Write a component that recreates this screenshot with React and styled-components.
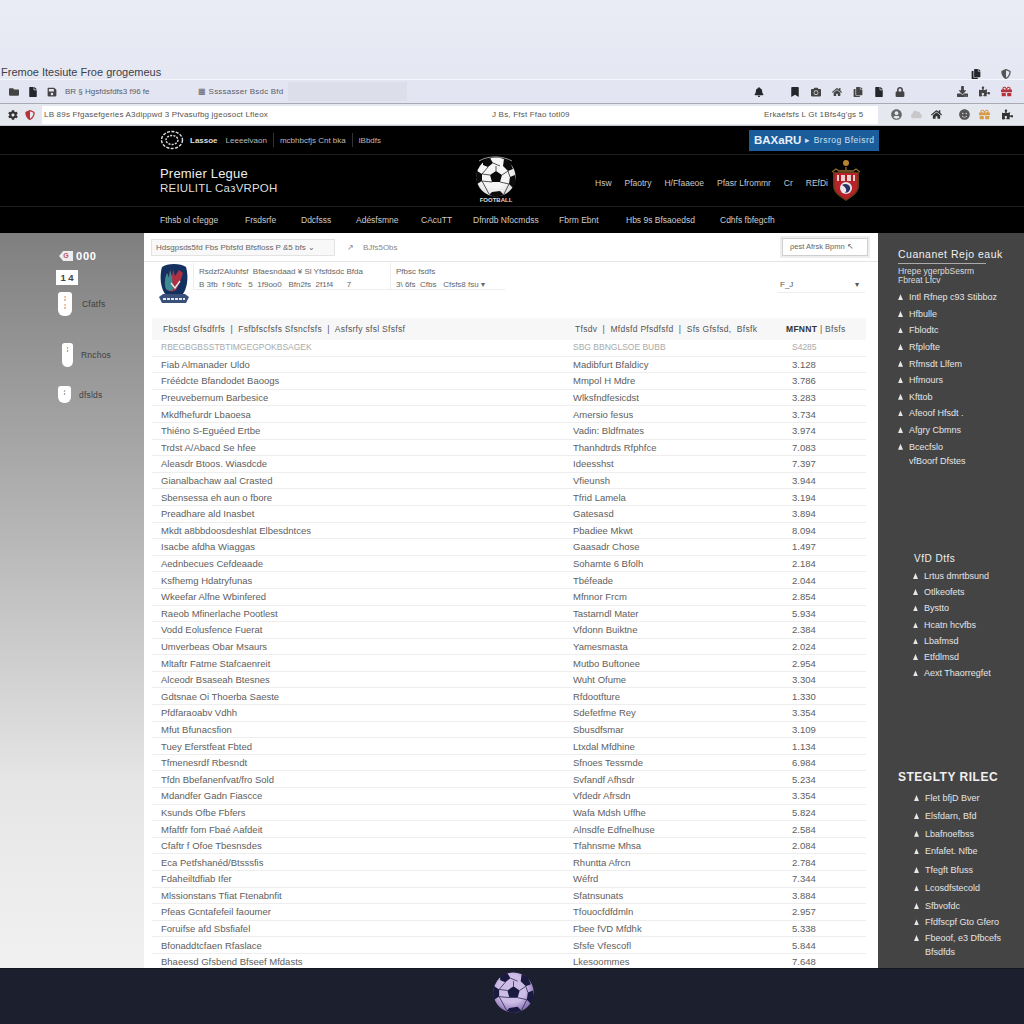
import React from "react";
import styled, { createGlobalStyle } from "styled-components";
import {
  FaFolder,
  FaFile,
  FaSave,
  FaBell,
  FaBookmark,
  FaCamera,
  FaCloud,
  FaCog,
  FaCopy,
  FaDownload,
  FaGift,
  FaHome,
  FaLock,
  FaPuzzlePiece,
  FaSmile,
  FaUserCircle,
  FaShieldAlt,
} from "react-icons/fa";

const GlobalStyle = createGlobalStyle`
  html, body { margin: 0; padding: 0; background: #fff; }
  * { box-sizing: border-box; }
`;

const Page = styled.div`
  width: 1024px;
  height: 1024px;
  display: flex;
  flex-direction: column;
  overflow: hidden;
  font-family: "Liberation Sans", Arial, sans-serif;
`;

const TitleBar = styled.div`
  height: 80px;
  background: linear-gradient(#e9ebf5, #e5e8f2);
  display: flex;
  align-items: flex-end;
  justify-content: space-between;
  padding: 0 13px 0 1px;
  font-size: 11px;
  color: #3d4048;
  border-bottom: 1px solid #f5f6fb;
  span { line-height: 14px; }
`;

const IconGroup = styled.div`
  display: flex;
  align-items: center;
  gap: ${(p) => p.$gap || 10}px;
  color: ${(p) => p.$color || "#25262b"};
  font-size: ${(p) => p.$size || 11}px;
`;

const TabBar = styled.div`
  height: 23px;
  background: #e3e6f2;
  display: flex;
  align-items: center;
  padding: 0 10px 0 9px;
  font-size: 8px;
  color: #5a5d66;
`;

const Spacer = styled.div`
  width: ${(p) => p.$w}px;
  flex: none;
`;

const TabText = styled.span`
  width: ${(p) => p.$w}px;
  flex: none;
  white-space: nowrap;
  letter-spacing: ${(p) => p.$track || 0}px;
`;

const TabFill = styled.div`
  width: 119px;
  height: 19px;
  background: #dcdfea;
  flex: none;
`;

const AddressRow = styled.div`
  height: 23px;
  background: #e6e8f0;
  border-top: 1px solid #a9abb3;
  border-bottom: 1px solid #c6c8d0;
  display: flex;
  align-items: center;
  padding: 0 8px;
`;

const AddressField = styled.div`
  width: 836px;
  height: 18px;
  flex: none;
  margin-right: 13px;
  background: #fff;
  display: grid;
  grid-template-columns: 448px 272px 1fr;
  align-items: center;
  padding-left: 2px;
  font-size: 8px;
  letter-spacing: 0.2px;
  color: #555;
  white-space: nowrap;
`;

const Masthead = styled.header`
  background: #000;
  color: #eee;
`;

const MastRow = styled.div`
  height: ${(p) => p.$h}px;
  border-bottom: 1px solid #1d1d1d;
  padding-left: 160px;
  display: flex;
  align-items: center;
`;

const TopLinks = styled.div`
  width: 589px;
  display: flex;
  align-items: center;
  gap: 6px;
  font-size: 8px;
  color: #bbb;
  b { color: #ddd; margin-right: 2px; }
`;

const Divider = styled.i`
  width: 1px;
  height: 14px;
  background: #333;
`;

const BlueButton = styled.div`
  width: 130px;
  height: 21px;
  background: #1b5c9a;
  color: #cfe0f0;
  font-size: 8.5px;
  letter-spacing: 0.5px;
  display: flex;
  align-items: center;
  gap: 4px;
  padding-left: 5px;
  white-space: nowrap;
  b { font-size: 11.5px; letter-spacing: 0; color: #e6f0fa; }
`;

const Brand = styled.div`
  width: 311px;
  line-height: 14px;
  font-size: 13px;
  letter-spacing: 0.2px;
  small { display: block; font-size: 11.5px; color: #ddd; }
`;

const MastLinks = styled.nav`
  width: 233px;
  margin: 4px 2px 0 74px;
  display: flex;
  justify-content: space-between;
  font-size: 8.5px;
  color: #c8c8c8;
  white-space: nowrap;
`;

const NavGrid = styled.nav`
  height: 26px;
  padding-left: 160px;
  display: grid;
  grid-template-columns: 85px 56px 55px 65px 52px 86px 67px 94px 80px;
  align-items: center;
  font-size: 8.5px;
  color: #ccc;
  white-space: nowrap;
`;

const Body = styled.div`
  flex: 1;
  min-height: 0;
  display: flex;
`;

const LeftRail = styled.aside`
  width: 144px;
  flex: none;
  padding: 16px 0 0 56px;
  background: linear-gradient(#7f7f7f, #b5b5b5 40%, #e6e6e6 75%, #f1f1f1);
  color: #fff;
`;

const Score = styled.div`
  display: flex;
  align-items: center;
  gap: 3px;
  padding-left: 3px;
  font-size: 11px;
  font-weight: bold;
  letter-spacing: 0.8px;
  line-height: 14px;
`;

const ScoreBadge = styled.span`
  width: 14px;
  height: 10px;
  background: #eee;
  clip-path: polygon(0 50%, 30% 0, 100% 0, 100% 100%, 30% 100%);
  color: #b5556b;
  font-size: 7px;
  line-height: 10px;
  letter-spacing: 0;
  text-align: center;
`;

const CountBox = styled.div`
  width: 22px;
  height: 15px;
  margin-top: 7px;
  background: #fff;
  color: #444;
  font-size: 9.5px;
  font-weight: bold;
  text-align: center;
  line-height: 15px;
`;

const RailItem = styled.div`
  display: flex;
  align-items: center;
  gap: ${(p) => p.$gap}px;
  margin-top: ${(p) => p.$top}px;
  padding-left: ${(p) => p.$indent}px;
  font-size: 8.5px;
  letter-spacing: 0.2px;
  color: #3f3f3f;
`;

const Tag = styled.div`
  width: ${(p) => p.$w}px;
  height: ${(p) => p.$h}px;
  flex: none;
  background: #fff;
  border-radius: 3px 3px 6px 6px;
  color: #444;
  font-size: 7px;
  line-height: 8px;
  text-align: center;
  padding-top: 3px;
`;

const Main = styled.main`
  width: 734px;
  flex: none;
  background: #fff;
  overflow: hidden;
`;

const Toolbar = styled.div`
  height: 29px;
  padding: 0 10px 0 7px;
  border-bottom: 1px solid #e4e4e4;
  display: flex;
  align-items: center;
  font-size: 8px;
  color: #666;
  white-space: nowrap;
`;

const SearchBox = styled.div`
  width: 184px;
  height: 17px;
  padding-left: 4px;
  background: #f8f8f8;
  border: 1px solid #e3e3e3;
  line-height: 15px;
`;

const SearchHint = styled.span`
  margin-left: 12px;
  flex: 1;
  color: #888;
`;

const ToolButton = styled.div`
  width: 86px;
  height: 18px;
  padding-left: 7px;
  border: 1px solid #cfcfcf;
  box-shadow: 0 0 0 2px #eee;
  line-height: 16px;
  font-size: 7.5px;
`;

const FilterRow = styled.div`
  height: 56px;
  padding: 1px 13px 0 15px;
  display: flex;
  align-items: flex-start;
`;

const FilterBox = styled.div`
  width: ${(p) => p.$w}px;
  height: 27px;
  margin-left: ${(p) => p.$left}px;
  padding: 2px 5px 0;
  border-bottom: 1px solid #eee;
  border-left: 1px solid #eee;
  font-size: 8px;
  line-height: 13px;
  color: #666;
  white-space: pre;
`;

const SelectBox = styled.div`
  width: 87px;
  height: 16px;
  margin: 14px 0 0 auto;
  padding: 0 6px 0 2px;
  border-bottom: 1px solid #eee;
  display: flex;
  justify-content: space-between;
  font-size: 8px;
  line-height: 15px;
  color: #555;
`;

const Table = styled.div`
  margin: 0 12px 0 8px;
`;

const TableHead = styled.div`
  height: 22px;
  background: #f7f7f7;
  display: grid;
  grid-template-columns: 412px 211px 1fr;
  align-items: center;
  padding-left: 11px;
  font-size: 8.5px;
  letter-spacing: 0.3px;
  color: #555;
  white-space: pre;
  b { color: #333; }
`;

const Row = styled.div`
  height: 16.6px;
  display: grid;
  grid-template-columns: 412px 219px 1fr;
  align-items: center;
  padding-left: 9px;
  border-bottom: 1px solid #eee;
  font-size: ${(p) => (p.$faint ? 8.5 : 9.5)}px;
  line-height: 15px;
  color: ${(p) => (p.$faint ? "#aaa" : "#606060")};
  white-space: nowrap;
`;

const RightRail = styled.aside`
  flex: 1;
  background: #444;
  color: #e4e4e4;
  padding: 14px 0 0 20px;
  font-size: 9px;
`;

const RailHeading = styled.h3`
  margin: ${(p) => p.$top || 0}px 0 0;
  padding-left: ${(p) => p.$indent || 0}px;
  font-size: ${(p) => p.$size || 10.5}px;
  font-weight: ${(p) => p.$weight || "normal"};
  letter-spacing: 0.5px;
  line-height: 14px;
  color: #f0f0f0;
  white-space: nowrap;
`;

const RailRule = styled.div`
  width: 88px;
  height: 1px;
  margin-top: 2px;
  background: #aaa;
`;

const RailNote = styled.p`
  margin: 3px 0 4px;
  font-size: 8.5px;
  line-height: 9px;
  color: #ddd;
`;

const RailList = styled.ul`
  list-style: none;
  margin: ${(p) => p.$top || 0}px 0 0;
  padding: 0 0 0 ${(p) => p.$indent || 0}px;
`;

const RailLink = styled.li`
  height: ${(p) => p.$h}px;
  display: flex;
  align-items: center;
  gap: 6px;
  white-space: nowrap;
  &::before {
    content: "";
    width: 5px;
    height: 6px;
    flex: none;
    background: ${(p) => (p.$plain ? "transparent" : "#e8e8e8")};
    clip-path: polygon(50% 0, 100% 100%, 0 100%);
  }
`;

const Footer = styled.footer`
  height: 56px;
  flex: none;
  background: #1c1f2e;
  border-top: 1px solid #14161f;
  display: flex;
  justify-content: center;
  padding: 3px 0 0 2px;
`;

const rows = [
  ["RBEGBGBSSTBTIMGEGPOKBSAGEK", "SBG BBNGLSOE BUBB", "S4285"],
  ["Fiab Almanader Uldo", "Madibfurt Bfaldicy", "3.128"],
  ["Fréédcte Bfandodet Baoogs", "Mmpol H Mdre", "3.786"],
  ["Preuvebernum Barbesice", "Wlksfndfesicdst", "3.283"],
  ["Mkdfhefurdr Lbaoesa", "Amersio fesus", "3.734"],
  ["Thiéno S-Eguéed Ertbe", "Vadin: Bldfmates", "3.974"],
  ["Trdst A/Abacd Se hfee", "Thanhdtrds Rfphfce", "7.083"],
  ["Aleasdr Btoos. Wiasdcde", "Ideesshst", "7.397"],
  ["Gianalbachaw aal Crasted", "Vfieunsh", "3.944"],
  ["Sbensessa eh aun o fbore", "Tfrid Lamela", "3.194"],
  ["Preadhare ald Inasbet", "Gatesasd", "3.894"],
  ["Mkdt a8bbdoosdeshlat Elbesdntces", "Pbadiee Mkwt", "8.094"],
  ["Isacbe afdha Wiaggas", "Gaasadr Chose", "1.497"],
  ["Aednbecues Cefdeaade", "Sohamte 6 Bfolh", "2.184"],
  ["Ksfhemg Hdatryfunas", "Tbéfeade", "2.044"],
  ["Wkeefar Alfne Wbinfered", "Mfnnor Frcm", "2.854"],
  ["Raeob Mfinerlache Pootlest", "Tastarndl Mater", "5.934"],
  ["Vodd Eolusfence Fuerat", "Vfdonn Buiktne", "2.384"],
  ["Umverbeas Obar Msaurs", "Yamesmasta", "2.024"],
  ["Mltaftr Fatme Stafcaenreit", "Mutbo Buftonee", "2.954"],
  ["Alceodr Bsaseah Btesnes", "Wuht Ofume", "3.304"],
  ["Gdtsnae Oi Thoerba Saeste", "Rfdootfture", "1.330"],
  ["Pfdfaraoabv Vdhh", "Sdefetfme Rey", "3.354"],
  ["Mfut Bfunacsfion", "Sbusdfsmar", "3.109"],
  ["Tuey Eferstfeat Fbted", "Ltxdal Mfdhine", "1.134"],
  ["Tfmenesrdf Rbesndt", "Sfnoes Tessmde", "6.984"],
  ["Tfdn Bbefanenfvat/fro Sold", "Svfandf Afhsdr", "5.234"],
  ["Mdandfer Gadn Fiascce", "Vfdedr Afrsdn", "3.354"],
  ["Ksunds Ofbe Fbfers", "Wafa Mdsh Uffhe", "5.824"],
  ["Mfaftfr fom Fbaé Aafdeit", "Alnsdfe Edfnelhuse", "2.584"],
  ["Cfaftr f Ofoe Tbesnsdes", "Tfahnsme Mhsa", "2.084"],
  ["Eca Petfshanéd/Btsssfis", "Rhuntta Afrcn", "2.784"],
  ["Fdaheiltdfiab Ifer", "Wéfrd", "7.344"],
  ["Mlssionstans Tfiat Ftenabnfit", "Sfatnsunats", "3.884"],
  ["Pfeas Gcntafefeil faoumer", "Tfouocfdfdmln", "2.957"],
  ["Foruifse afd Sbsfiafel", "Fbee fVD Mfdhk", "5.338"],
  ["Bfonaddtcfaen Rfaslace", "Sfsfe Vfescofl", "5.844"],
  ["Bhaeesd Gfsbend Bfseef Mfdasts", "Lkesoommes", "7.648"],
];

const navItems = [
  "Fthsb ol cfegge",
  "Frsdsrfe",
  "Ddcfsss",
  "Adésfsmne",
  "CAcuTT",
  "Dfnrdb Nfocmdss",
  "Fbrm Ebnt",
  "Hbs 9s Bfsaoedsd",
  "Cdhfs fbfegcfh",
];

const firstLinks = [
  "Intl Rfnep c93 Stibboz",
  "Hfbulle",
  "Fblodtc",
  "Rfplofte",
  "Rfmsdt Llfem",
  "Hfmours",
  "Kfttob",
  "Afeoof Hfsdt .",
  "Afgry Cbmns",
  "Bcecfslo",
];

const secondLinks = [
  ["Lrtus dmrtbsund", 16],
  ["Otlkeofets", 16],
  ["Bystto", 17],
  ["Hcatn hcvfbs", 17],
  ["Lbafmsd", 15],
  ["Etfdlmsd", 16],
  ["Aext Thaorregfet", 17],
];

const thirdLinks = [
  ["Flet bfjD Bver", 18],
  ["Elsfdarn, Bfd", 18],
  ["Lbafnoefbss", 17.5],
  ["Enfafet. Nfbe", 18],
  ["Tfegft Bfuss", 19],
  ["Lcosdfstecold", 18],
  ["Sfbvofdc", 17],
  ["Ffdfscpf Gto Gfero", 16],
  ["Fbeoof, e3 Dfbcefs", 15],
];

// same panel layout for both balls, only the colours and the label differ
const Ball = ({ size, skin, rim, patch, label, id }) => (
  <svg width={size} height={size} viewBox={label ? "-25 -21 50 50" : "-20 -20 40 40"} aria-hidden="true">
    <defs>
      <radialGradient id={id} cx="45%" cy="40%" r="65%">
        <stop offset="55%" stopColor={skin} />
        <stop offset="100%" stopColor={rim} />
      </radialGradient>
    </defs>
    <circle r="19.6" fill={`url(#${id})`} />
    <g fill={patch}>
      <path d="M0-6l6 4-2 7h-8l-2-7z" />
      <path d="M-13-16l7-3 3 5-5 4-5-2z" />
      <path d="M8-18l6 3 3 7-5 2-5-5z" />
      <path d="M19-2l1 7-3 6-4-4 1-7z" />
      <path d="M-4 15l8-1 4 4-8 2-7-2z" />
      <path d="M-19-6l5 3v7l-5 3-1-7z" />
    </g>
    <path
      d="M0-6v-5M6-2l6-4M4 5l9 2M-4 5l-10-1M-6-2l-8-1M-3-14l7 3M-8-10l-6 7M12-6l2 6M13 7l-5 10M-14 4l7 13"
      stroke={patch}
      strokeWidth="0.7"
      fill="none"
    />
    {label && (
      <>
        <path d="M-17-16c10-6 24-5 33 0" stroke="#bbb" strokeWidth="0.8" fill="none" />
        <text y="25" textAnchor="middle" fontSize="6" fontWeight="bold" fill="#ddd" fontFamily="Liberation Sans">
          {label}
        </text>
      </>
    )}
  </svg>
);

const RedCrest = () => (
  <svg width="32" height="44" viewBox="0 0 32 44" aria-hidden="true">
    <circle cx="16" cy="4" r="3" fill="#b8842c" />
    <path d="M16 8v3M2 13l4-3 3 2h14l3-2 4 3" stroke="#8a6a2c" strokeWidth="1.4" fill="none" />
    <path d="M3 13h26v14c0 7-7 11-13 15C10 38 3 34 3 27z" fill="#5c3a14" />
    <path d="M4.500 14h23v13c0 6-6 10-11.500 13.500C11 37 4.500 33 4.500 27z" fill="#b8222a" />
    <path d="M7 16h18v6H7z" fill="#eccfcf" />
    <path d="M10 16v6M16 16v6M22 16v6" stroke="#a81c22" strokeWidth="2" />
    <circle cx="16" cy="29" r="6" fill="#e8e8e8" />
    <path d="M12 26c3-2 7-1 8 2s-2 6-5 6c2-2 2-5-3-8z" fill="#2b2f66" />
  </svg>
);

const BlueCrest = () => (
  <svg width="30" height="41" viewBox="0 0 30 41" aria-hidden="true">
    <path d="M3 4c5-4 19-4 24 0 3 10 1 23-4 28H7C2 27 0 14 3 4z" fill="#13305e" />
    <path d="M7 26c-2-6-1-11 1-16l2 5 1-8 2 7 1-8 2 7 4-6 4 3-3 9-4 8c-3 2-7 2-10-1z" fill="#b03043" />
    <path d="M7 26c-2-6-1-11 1-16l2 5 1-8 2 7 1 13c-2 1-5 1-7-1z" fill="#3c8a92" />
    <path d="M12 20l4 5 5-7" stroke="#e8e8e8" strokeWidth="1.4" fill="none" />
    <path d="M0 34l4-3h22l4 3-3 6H3z" fill="#39507a" />
    <path d="M4 36h22" stroke="#e6e6e6" strokeWidth="2" strokeDasharray="3 1" />
  </svg>
);

const LogoMark = () => (
  <svg width="24" height="20" viewBox="0 0 24 20" aria-hidden="true">
    <ellipse cx="12" cy="10" rx="10.500" ry="8.500" fill="none" stroke="#ddd" strokeWidth="1.4" strokeDasharray="3 1.4" />
    <ellipse cx="12" cy="10" rx="6" ry="4.500" fill="none" stroke="#ddd" strokeWidth="1.4" strokeDasharray="2 1.2" />
  </svg>
);

const App = () => {
  return (
    <Page>
      <GlobalStyle />
      <TitleBar>
        <span>Fremoe Itesiute Froe grogemeus</span>
        <IconGroup $gap={20} $size={10}>
          <FaCopy />
          <FaShieldAlt color="#555" />
        </IconGroup>
      </TitleBar>
      <TabBar>
        <IconGroup $gap={9} $size={10}>
          <FaFolder color="#444" />
          <FaFile />
          <FaSave color="#444" />
        </IconGroup>
        <Spacer $w={8} />
        <TabText $w={133}>BR § Hgsfdsfdfs3 f96 fe</TabText>
        <TabText $w={90} $track={0.2}>▦ Ssssasser Bsdc Bfd</TabText>
        <TabFill />
        <Spacer $w={347} />
        <IconGroup $gap={26} $size={10}>
          <FaBell />
          <IconGroup $gap={11} $size={10}>
            <FaBookmark />
            <FaCamera color="#444" />
            <FaHome color="#444" />
            <FaCopy color="#444" />
            <FaFile />
            <FaLock color="#444" />
          </IconGroup>
        </IconGroup>
        <Spacer $w={52} />
        <IconGroup $gap={11} $size={11}>
          <FaDownload color="#444" />
          <FaPuzzlePiece color="#444" />
          <FaGift color="#b6323a" />
        </IconGroup>
      </TabBar>
      <AddressRow>
        <IconGroup $gap={7} $size={10}>
          <FaCog color="#333" />
          <FaShieldAlt color="#b8323a" />
        </IconGroup>
        <Spacer $w={7} />
        <AddressField>
          <span>LB 89s Ffgasefgeries A3dippwd 3 Pfvasufbg jgeosoct Lfleox</span>
          <span>J Bs, Ffst Ffao totl09</span>
          <span>Erkaéfsfs L Gt 1Bfs4g'gs 5</span>
        </AddressField>
        <IconGroup $gap={9} $size={11}>
          <FaUserCircle color="#666" />
          <FaCloud color="#c8c8c8" />
          <FaHome color="#333" />
        </IconGroup>
        <Spacer $w={17} />
        <IconGroup $gap={9} $size={11}>
          <FaSmile color="#555" />
          <FaGift color="#d79a45" />
        </IconGroup>
        <Spacer $w={12} />
        <IconGroup $size={11}>
          <FaPuzzlePiece color="#333" />
        </IconGroup>
      </AddressRow>
      <Masthead>
        <MastRow $h={29}>
          <TopLinks>
            <LogoMark />
            <b>Lassoe</b>
            <span>Leeeelvaon</span>
            <Divider />
            <span>mcbhbcfjs Cnt bka</span>
            <Divider />
            <span>lBbdfs</span>
          </TopLinks>
          <BlueButton>
            <b>BAXaRU</b>
            <span>▸ Brsrog Bfeisrd</span>
          </BlueButton>
        </MastRow>
        <MastRow $h={52}>
          <Brand>
            Premier Legue
            <small>REIULITL CaзVRPOH</small>
          </Brand>
          <Ball id="headBall" size={50} skin="#f6f6f6" rim="#d8d8d8" patch="#0b0b0b" label="FOOTBALL" />
          <MastLinks>
            <span>Hsw</span>
            <span>Pfaotry</span>
            <span>H/Ffaaeoe</span>
            <span>Pfasr Lfrommr</span>
            <span>Cr</span>
            <span>REfDi</span>
          </MastLinks>
          <RedCrest />
        </MastRow>
        <NavGrid>
          {navItems.map((item) => (
            <span key={item}>{item}</span>
          ))}
        </NavGrid>
      </Masthead>
      <Body>
        <LeftRail>
          <Score>
            <ScoreBadge>G</ScoreBadge>
            000
          </Score>
          <CountBox>1 4</CountBox>
          <RailItem $top={7} $gap={10} $indent={2}>
            <Tag $w={14} $h={24}>
              ⁞<br />⁞
            </Tag>
            Cfatfs
          </RailItem>
          <RailItem $top={27} $gap={8} $indent={6}>
            <Tag $w={11} $h={24}>⁞</Tag>
            Rnchos
          </RailItem>
          <RailItem $top={19} $gap={8} $indent={2}>
            <Tag $w={13} $h={17}>⁞</Tag>
            dfslds
          </RailItem>
        </LeftRail>
        <Main>
          <Toolbar>
            <SearchBox>Hdsgpsds5fd Fbs Pbfsfd Bfsfloss P &amp;5 bfs ⌄</SearchBox>
            <SearchHint>↗ &nbsp;&nbsp; BJfs5Obs</SearchHint>
            <ToolButton>ρest Afrsk Bpmn ↖</ToolButton>
          </Toolbar>
          <FilterRow>
            <BlueCrest />
            <FilterBox $w={197} $left={4}>
              {"Rsdzf2Aluhfsf  Bfaesndaad ¥ Sl Yfsfdsdc Bfda\nB 3fb  f 9bfc   5  1f9oo0   Bfn2fs  2f1f4      7"}
            </FilterBox>
            <FilterBox $w={115} $left={0}>
              {"Pfbsc fsdfs\n3\\ 6fs  Cfbs   Cfsfs8 fsu ▾"}
            </FilterBox>
            <SelectBox>
              <span>F_J</span>
              <span>▾</span>
            </SelectBox>
          </FilterRow>
          <Table>
            <TableHead>
              <span>Fbsdsf Gfsdfrfs  |  Fsfbfscfsfs Sfsncfsfs  |  Asfsrfy sfsl Sfsfsf</span>
              <span>Tfsdv  |  Mfdsfd Pfsdfsfd  |  Sfs Gfsfsd,  Bfsfk</span>
              <span>
                <b>MFNNT</b> | Bfsfs
              </span>
            </TableHead>
            {rows.map(([name, club, amount], i) => (
              <Row key={name} $faint={i === 0}>
                <span>{name}</span>
                <span>{club}</span>
                <span>{amount}</span>
              </Row>
            ))}
          </Table>
        </Main>
        <RightRail>
          <RailHeading>Cuananet Rejo eauk</RailHeading>
          <RailRule />
          <RailNote>
            Hrepe ygerpbSesrm
            <br />
            Fbreat Lfcv
          </RailNote>
          <RailList>
            {firstLinks.map((item) => (
              <RailLink key={item} $h={16.6}>
                {item}
              </RailLink>
            ))}
            <RailLink $h={13} $plain>
              vfBoorf Dfstes
            </RailLink>
          </RailList>
          <RailHeading $top={84} $indent={16} $size={10}>
            VfD Dtfs
          </RailHeading>
          <RailList $top={2} $indent={15}>
            {secondLinks.map(([item, h]) => (
              <RailLink key={item} $h={h}>
                {item}
              </RailLink>
            ))}
          </RailList>
          <RailHeading $top={88} $size={12} $weight="bold">
            STEGLTY RILEC
          </RailHeading>
          <RailList $top={5} $indent={16}>
            {thirdLinks.map(([item, h]) => (
              <RailLink key={item} $h={h}>
                {item}
              </RailLink>
            ))}
            <RailLink $h={13} $plain>
              Bfsdfds
            </RailLink>
          </RailList>
        </RightRail>
      </Body>
      <Footer>
        <Ball id="footBall" size={41} skin="#cdbce6" rim="#7a62a8" patch="#1a1a40" />
      </Footer>
    </Page>
  );
};

export default App;
